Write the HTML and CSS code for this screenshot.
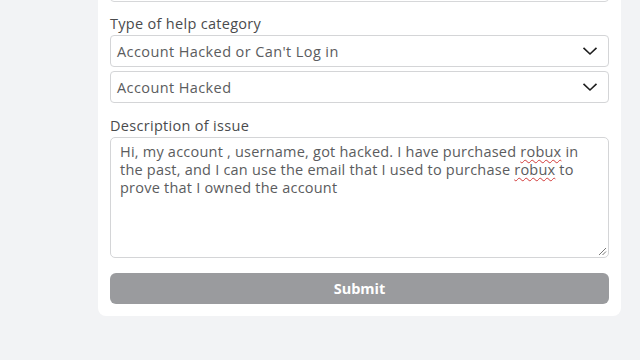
FILE: index.html
```
<!DOCTYPE html>
<html>
<head>
<meta charset="utf-8">
<link rel="stylesheet" href="styles.css">
</head>
<body>
<div class="page">
  <div class="card">
    <div class="field prev"></div>
    <div class="label first">Type of help category</div>
    <div class="select">
      <span>Account Hacked or Can't Log in</span>
      <svg class="chev" width="16" height="10" viewBox="0 0 16 10"><path d="M1.5 1.8 L8 8 L14.5 1.8" fill="none" stroke="#1e1e1e" stroke-width="1.6"/></svg>
    </div>
    <div class="select second">
      <span>Account Hacked</span>
      <svg class="chev" width="16" height="10" viewBox="0 0 16 10"><path d="M1.5 1.8 L8 8 L14.5 1.8" fill="none" stroke="#1e1e1e" stroke-width="1.6"/></svg>
    </div>
    <div class="label desc">Description of issue</div>
    <div class="textarea">
      <p>Hi, my account , username, got hacked. I have purchased <span class="sp">robux</span> in the past, and I can use the email that I used to purchase <span class="sp">robux</span> to prove that I owned the account</p>
      <svg class="grip" width="10" height="10" viewBox="0 0 10 10"><path d="M9 2 L2 9 M9 5.5 L5.5 9" stroke="#777" stroke-width="1"/></svg>
    </div>
    <div class="button">Submit</div>
  </div>
</div>
</body>
</html>
```
FILE: styles.css
```
html, body {
  margin: 0;
  padding: 0;
  background: #f2f3f5;
  width: 640px;
  height: 360px;
  overflow: hidden;
}
.page {
  padding-left: 98px;
}
.card {
  width: 499px;
  margin-top: -40px;
  background: #ffffff;
  border-radius: 0 0 8px 8px;
  padding: 0 12px 12px 12px;
  font-family: "Open Sans", "Liberation Sans", sans-serif;
}
.field {
  box-sizing: border-box;
  height: 42px;
  border: 1px solid #d6d7d9;
  border-radius: 4px;
}
.label {
  font-size: 14.5px;
  line-height: 20px;
  color: #4a4b4d;
  letter-spacing: 0.3px;
}
.label.first {
  margin-top: 12px;
  height: 21px;
}
.label.desc {
  margin-top: 13px;
  height: 21px;
}
.select {
  box-sizing: border-box;
  height: 32px;
  border: 1px solid #d4d5d7;
  border-radius: 4px;
  display: flex;
  align-items: center;
  justify-content: space-between;
  padding: 0 10px 0 6px;
  font-size: 14.5px;
  letter-spacing: 0.4px;
  color: #5b5c5e;
}
.select.second {
  margin-top: 4px;
}
.chev {
  display: block;
}
.textarea {
  position: relative;
  box-sizing: border-box;
  height: 121px;
  border: 1px solid #d4d5d7;
  border-radius: 5px;
  padding: 5px 9px 4px 9px;
  font-size: 14.5px;
  line-height: 18px;
  letter-spacing: 0.22px;
  color: #5b5c5e;
}
.textarea p {
  margin: 0;
}
.sp {
  text-decoration: underline wavy #d23b3b;
  text-decoration-thickness: 1px;
  text-underline-offset: 2px;
}
.grip {
  position: absolute;
  right: 1px;
  bottom: 1px;
}
.button {
  margin-top: 15px;
  height: 31px;
  border-radius: 6px;
  background: #9a9b9e;
  color: #ffffff;
  font-weight: 700;
  font-size: 14.5px;
  display: flex;
  align-items: center;
  justify-content: center;
}
```
